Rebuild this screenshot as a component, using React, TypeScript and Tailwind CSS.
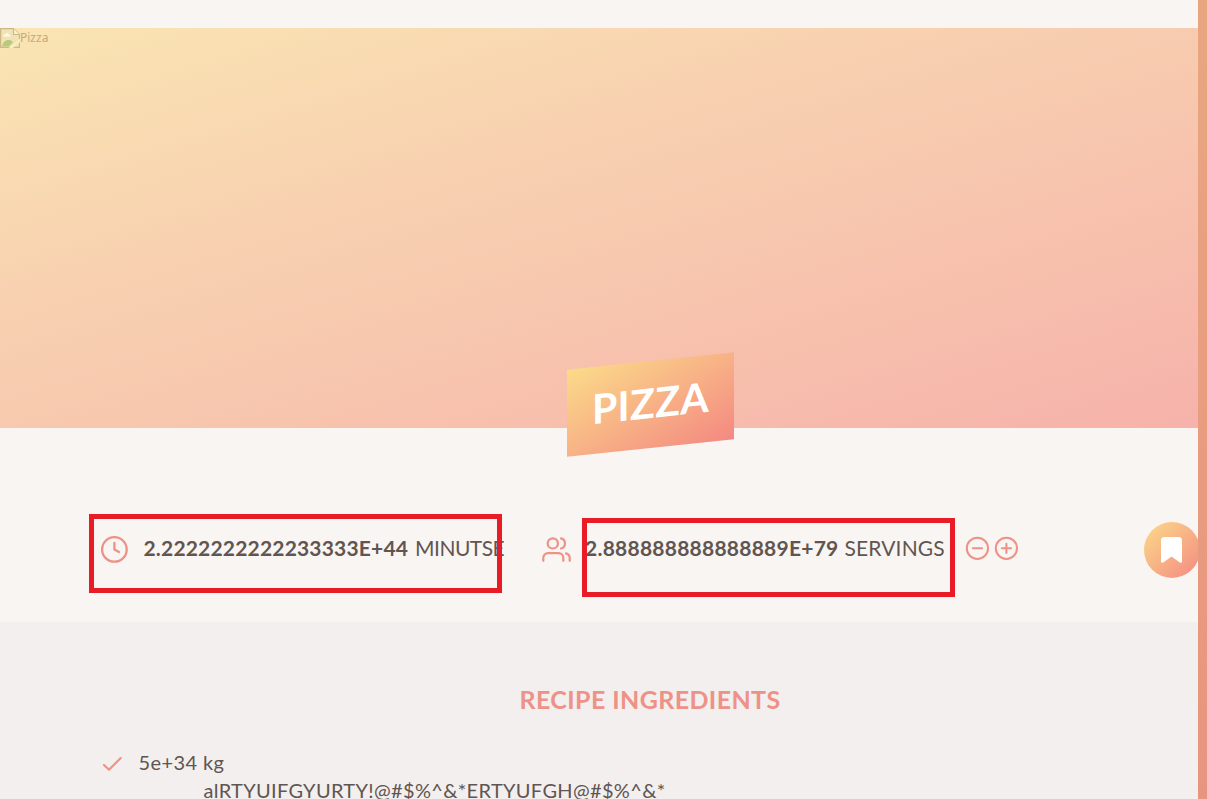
function BrokenImageIcon() {
  return (
    <svg className="block h-5 w-5" viewBox="0 0 20 20" fill="none">
      <path d="M.6.6H13.5L19.4 6.5V19.4H.6Z" fill="#f1e2b8" stroke="#cdb885" strokeWidth="1.2" />
      <path d="M13.5.6V6.5H19.4" fill="#faf0d2" stroke="#cdb885" strokeWidth="1.2" />
      <path d="M2 18.6C3 13.5 6 11.5 9 12C11 12.3 12.4 13.2 13 14.2L8.8 18.6H2Z" fill="#b9cb79" />
      <path d="M3 8.5C3 7 4.2 6.3 5.2 6.5C6 4.8 8.5 5 9 6.8C10 6.8 10.6 7.6 10.5 8.5Z" fill="#fffbe8" />
      <path d="M8.5 20L20 10.5V14L13 20Z" fill="#fbedbd" />
    </svg>
  );
}

function ClockIcon() {
  return (
    <svg className="block h-7 w-7 shrink-0" viewBox="0 0 28 28" fill="none" stroke="#ee9186" strokeWidth="2.3" strokeLinecap="round" strokeLinejoin="round">
      <circle cx="14.4" cy="14.4" r="12.3" />
      <path d="M14.4 7.8V14.4L19 17" />
    </svg>
  );
}

function UsersIcon() {
  return (
    <svg className="block h-7 w-[30px] shrink-0" viewBox="0 0 30 28" fill="none" stroke="#ee9186" strokeWidth="2.2" strokeLinecap="round" strokeLinejoin="round">
      <circle cx="11.8" cy="8.4" r="5.1" />
      <path d="M2.3 25.8V22.8A4.7 4.7 0 0 1 7 18.1H17.6A4.7 4.7 0 0 1 22.3 22.8V25.8" />
      <path d="M20 3.4A5.2 5.2 0 0 1 20 13.5" />
      <path d="M25 18.4A4.8 4.8 0 0 1 28.7 23V25.8" />
    </svg>
  );
}

function RoundButton({ plus, label }: { plus?: boolean; label: string }) {
  return (
    <button className="block h-6 w-6" aria-label={label}>
      <svg className="block h-6 w-6" viewBox="0 0 24 24" fill="none" stroke="#ee9186" strokeWidth="2" strokeLinecap="round">
        <circle cx="12.4" cy="12.3" r="10.6" />
        <path d="M7.8 12.3H17" />
        {plus && <path d="M12.4 7.7V16.9" />}
      </svg>
    </button>
  );
}

export default function App() {
  return (
    <div className="flex h-[799px] w-[1207px] overflow-hidden bg-linear-to-b from-[#e8a67f] to-[#e8957f] font-['Lato','Open_Sans',sans-serif] text-[#615551]">
      <main className="relative w-[1198px] shrink-0 overflow-hidden bg-[#f9f5f3]">
        <div className="w-[1300px]">
          <figure className="relative mt-7 h-[400px] bg-[linear-gradient(to_bottom_right,#fae5b3,#f8d1b0_35%,#f6b0aa)]">
            <div className="flex">
              <BrokenImageIcon />
              <span className="pt-[3px] font-['Noto_Sans',sans-serif] text-[12px] leading-[14px] text-[#c7aa7a]">Pizza</span>
            </div>
            <h1 className="absolute top-[333px] left-[567px] flex h-[87px] w-[167px] -skew-y-6 items-center justify-center bg-[linear-gradient(to_bottom_right,#fbdb89,#f48982)] pb-[3px] text-[41px] font-bold tracking-[0.3px] whitespace-nowrap text-white">
              PIZZA
            </h1>
          </figure>

          <section className="flex h-[194px] items-start pt-[107px] pl-[100px] text-[21px] leading-7 whitespace-nowrap">
            <div className="flex w-[441px] shrink-0">
              <ClockIcon />
              <span className="-mt-px ml-[15.5px] w-[271.5px] shrink-0 font-bold tracking-[0.18px]">2.2222222222233333E+44</span>
              <span className="-mt-px tracking-[-0.5px]">MINUTSE</span>
            </div>
            <div className="flex w-[424px] shrink-0">
              <UsersIcon />
              <span className="-mt-px ml-[14px] w-[259.5px] shrink-0 font-bold tracking-[0.24px]">2.888888888888889E+79</span>
              <span className="-mt-px tracking-[0.15px]">SERVINGS</span>
            </div>
            <div className="flex w-[179px] shrink-0 gap-[5px] pt-px">
              <RoundButton label="Decrease servings" />
              <RoundButton label="Increase servings" plus />
            </div>
            <button aria-label="Bookmark" className="-mt-[13px] flex h-14 w-14 shrink-0 items-center justify-center rounded-full bg-[linear-gradient(to_bottom_right,#fbdb89,#f48982)] pr-px">
              <svg className="block h-[26px] w-[21px]" viewBox="0 0 21 26" fill="white">
                <path d="M3.5 0H17.5Q21 0 21 3.5V25Q20 26.5 18.5 25.2L10.5 19.5L2.5 25.2Q1 26.5 0 25V3.5Q0 0 3.5 0Z" />
              </svg>
            </button>
          </section>

          <section className="h-[240px] bg-[#f2efee] pt-[61px]">
            <h2 className="text-center text-[25px] leading-8 font-bold tracking-[0.4px] text-[#ee9186]">RECIPE INGREDIENTS</h2>
            <div className="flex pt-[33px] pl-[102px] text-[20px] leading-7 whitespace-nowrap">
              <svg className="mt-1.5 block h-5 w-5 shrink-0" viewBox="0 0 20 20" fill="none" stroke="#ee9186" strokeWidth="2.1" strokeLinecap="round" strokeLinejoin="round">
                <path d="M2 11L7 15.7L18.7 4" />
              </svg>
              <div className="ml-[16.5px]">
                <p className="tracking-[0.4px]">5e+34 kg</p>
                <p className="pl-[65px] tracking-[0.33px]">alRTYUIFGYURTY!@#$%^&amp;*ERTYUFGH@#$%^&amp;*</p>
              </div>
            </div>
          </section>
        </div>
        <div className="pointer-events-none absolute top-[514px] left-[89px] h-[79px] w-[413px] border-5 border-[#e81c27]" />
        <div className="pointer-events-none absolute top-[518px] left-[582px] h-[79px] w-[373px] border-5 border-[#e81c27]" />
      </main>
    </div>
  );
}
